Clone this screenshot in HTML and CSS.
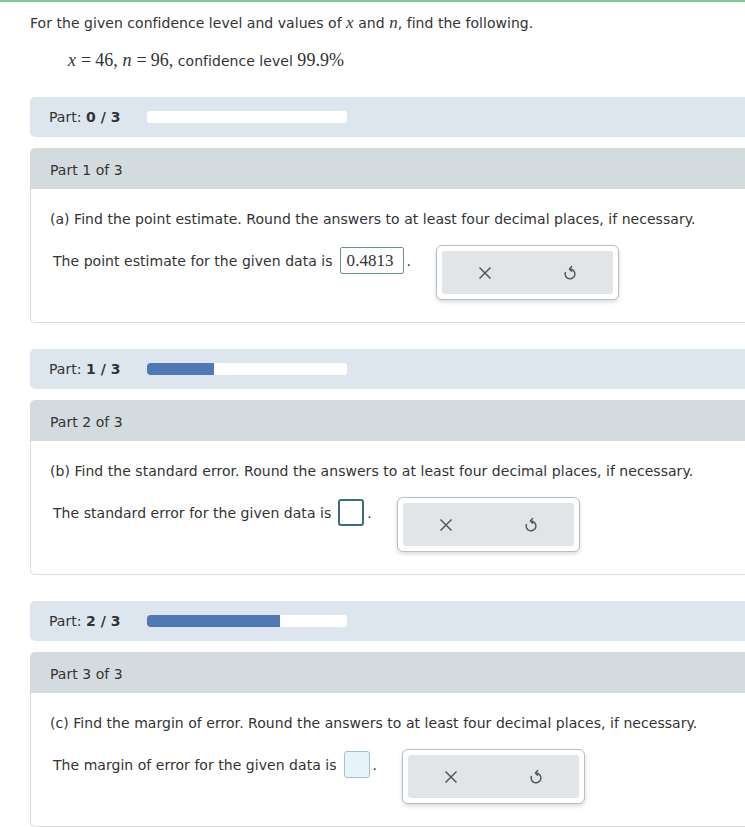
FILE: index.html
```html
<!DOCTYPE html>
<html>
<head>
<meta charset="utf-8">
<link rel="stylesheet" href="styles.css">
</head>
<body>
<div class="topline"></div>
<div class="page">
  <p class="intro">For the given confidence level and values of <span class="m">x</span> and <span class="m">n</span>, find the following.</p>
  <p class="given"><span class="m">x</span><span class="mr"><span class="eq">=</span>46, </span><span class="m">n</span><span class="mr"><span class="eq">=</span>96, </span>confidence level <span class="mr">99.9%</span></p>

  <div class="partbar">
    <span class="plabel">Part: <b>0 / 3</b></span>
    <div class="progress"><div class="fill" style="width:0%"></div></div>
  </div>
  <div class="card">
    <div class="card-head">Part 1 of 3</div>
    <div class="card-body">
      <p class="q">(a) Find the point estimate. Round the answers to at least four decimal places, if necessary.</p>
      <div class="row">
        <span class="ans">The point estimate for the given data is</span>
        <span class="box filled">0.4813</span><span class="dot">.</span>
        <div class="tools">
          <div class="tools-in">
            <span class="tbtn"><svg width="14" height="14" viewBox="0 0 14 14"><path d="M1.5 1.5 L12.5 12.5 M12.5 1.5 L1.5 12.5" stroke="#4f5a5e" stroke-width="1.5" fill="none"/></svg></span>
            <span class="tbtn"><svg width="16" height="16" viewBox="0 0 16 16"><path d="M8 4 A4.9 4.9 0 1 1 3.5 7" stroke="#4f5a5e" stroke-width="1.5" fill="none"/><path d="M9.6 1.6 L7.4 3.9 L9.6 6.1" stroke="#4f5a5e" stroke-width="1.5" fill="none" stroke-linejoin="round" stroke-linecap="round"/></svg></span>
          </div>
        </div>
      </div>
    </div>
  </div>

  <div class="partbar">
    <span class="plabel">Part: <b>1 / 3</b></span>
    <div class="progress"><div class="fill" style="width:33.3%"></div></div>
  </div>
  <div class="card">
    <div class="card-head">Part 2 of 3</div>
    <div class="card-body">
      <p class="q">(b) Find the standard error. Round the answers to at least four decimal places, if necessary.</p>
      <div class="row">
        <span class="ans">The standard error for the given data is</span>
        <span class="box active"></span><span class="dot">.</span>
        <div class="tools">
          <div class="tools-in">
            <span class="tbtn"><svg width="14" height="14" viewBox="0 0 14 14"><path d="M1.5 1.5 L12.5 12.5 M12.5 1.5 L1.5 12.5" stroke="#4f5a5e" stroke-width="1.5" fill="none"/></svg></span>
            <span class="tbtn"><svg width="16" height="16" viewBox="0 0 16 16"><path d="M8 4 A4.9 4.9 0 1 1 3.5 7" stroke="#4f5a5e" stroke-width="1.5" fill="none"/><path d="M9.6 1.6 L7.4 3.9 L9.6 6.1" stroke="#4f5a5e" stroke-width="1.5" fill="none" stroke-linejoin="round" stroke-linecap="round"/></svg></span>
          </div>
        </div>
      </div>
    </div>
  </div>

  <div class="partbar">
    <span class="plabel">Part: <b>2 / 3</b></span>
    <div class="progress"><div class="fill" style="width:66.6%"></div></div>
  </div>
  <div class="card">
    <div class="card-head">Part 3 of 3</div>
    <div class="card-body">
      <p class="q">(c) Find the margin of error. Round the answers to at least four decimal places, if necessary.</p>
      <div class="row">
        <span class="ans">The margin of error for the given data is</span>
        <span class="box empty"></span><span class="dot">.</span>
        <div class="tools">
          <div class="tools-in">
            <span class="tbtn"><svg width="14" height="14" viewBox="0 0 14 14"><path d="M1.5 1.5 L12.5 12.5 M12.5 1.5 L1.5 12.5" stroke="#4f5a5e" stroke-width="1.5" fill="none"/></svg></span>
            <span class="tbtn"><svg width="16" height="16" viewBox="0 0 16 16"><path d="M8 4 A4.9 4.9 0 1 1 3.5 7" stroke="#4f5a5e" stroke-width="1.5" fill="none"/><path d="M9.6 1.6 L7.4 3.9 L9.6 6.1" stroke="#4f5a5e" stroke-width="1.5" fill="none" stroke-linejoin="round" stroke-linecap="round"/></svg></span>
          </div>
        </div>
      </div>
    </div>
  </div>
</div>
</body>
</html>
```

FILE: styles.css
```css
html, body {
  margin: 0;
  padding: 0;
  background: #fff;
  overflow: hidden;
}
body {
  font-family: "DejaVu Sans", Verdana, sans-serif;
  font-size: 14px;
  letter-spacing: 0.04px;
  color: #333;
}
.topline {
  height: 2px;
  background: #7fc9a1;
}
.page {
  padding-left: 30px;
  width: 760px;
}
.intro {
  margin: 0;
  padding-top: 11px;
  line-height: 20px;
}
.given {
  margin: 18px 0 0 38px;
  line-height: 20px;
}
.m {
  font-family: "Liberation Serif", "Times New Roman", serif;
  font-style: italic;
  font-size: 18px;
  line-height: 1;
}
.intro .m {
  font-size: 17px;
}
.mr {
  font-family: "Liberation Serif", "Times New Roman", serif;
  font-size: 18px;
  line-height: 1;
}
.eq {
  padding: 0 4px 0 5px;
}
.partbar {
  margin-top: 26px;
  height: 40px;
  background: #dde6ef;
  border-radius: 5px 0 0 5px;
  display: flex;
  align-items: center;
  padding-left: 19px;
}
.plabel {
  width: 98px;
}
.plabel b {
  font-weight: bold;
}
.progress {
  width: 200px;
  height: 12px;
  background: #fff;
  border-radius: 3px;
  overflow: hidden;
}
.fill {
  height: 100%;
  background: #5079b4;
  border-radius: 3px 0 0 3px;
}
.card {
  margin-top: 11px;
}
.card-head {
  height: 41px;
  box-sizing: border-box;
  padding-top: 3px;
  background: #d4dbde;
  border-radius: 5px 0 0 0;
  display: flex;
  align-items: center;
  padding-left: 20px;
}
.card-body {
  border-left: 1px solid #dcdcdc;
  border-bottom: 1px solid #dcdcdc;
  border-radius: 0 0 0 5px;
  padding: 20px 0 22px 19px;
}
.q {
  margin: 0;
  line-height: 20px;
}
.row {
  margin-top: 16px;
  display: flex;
  align-items: flex-start;
  padding-left: 3px;
}
.ans {
  margin-top: 6px;
  line-height: 20px;
}
.box {
  margin: 2px 0 0 7px;
  height: 27px;
  box-sizing: border-box;
  border-radius: 3px;
  display: flex;
  align-items: center;
}
.box.filled {
  border: 1px solid #6f9196;
  padding: 0 6px;
  font-family: "Liberation Serif", "Times New Roman", serif;
  font-size: 17px;
  color: #333;
  width: 64px;
  border-radius: 2px;
}
.box.active {
  width: 26px;
  border: 2px solid #36707a;
}
.box.empty {
  width: 26px;
  border: 1px solid #9cc3d4;
  background: #e6f3fa;
}
.dot {
  margin: 6px 0 0 3px;
  line-height: 20px;
}
.tools {
  margin-left: 25px;
  width: 183px;
  height: 55px;
  box-sizing: border-box;
  border: 1px solid #b9bdbf;
  border-radius: 6px;
  padding: 5px;
  box-shadow: 0 2px 4px rgba(0,0,0,0.15);
  background: #fff;
}
.tools-in {
  height: 100%;
  background: #e1e5e7;
  border-radius: 3px;
  display: flex;
}
.tbtn {
  flex: 1;
  display: flex;
  align-items: center;
  justify-content: center;
}
.tbtn svg {
  display: block;
}
```
